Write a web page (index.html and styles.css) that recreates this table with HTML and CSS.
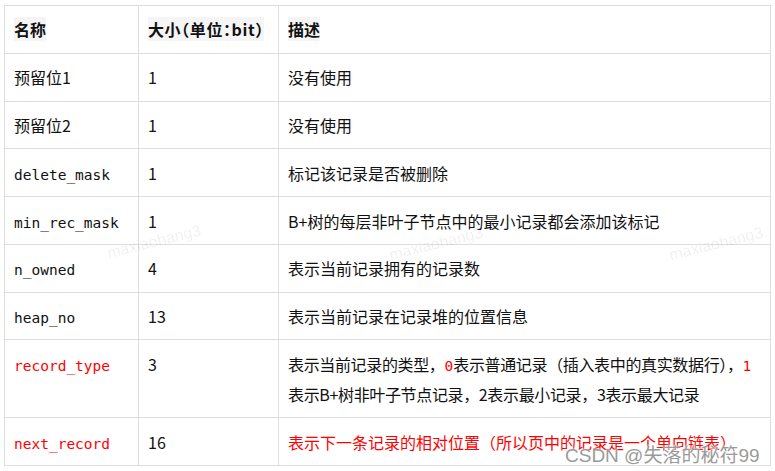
FILE: index.html
```html
<!DOCTYPE html>
<html lang="zh">
<head>
<meta charset="utf-8">
<link rel="stylesheet" href="styles.css">
</head>
<body>
<div class="wrap">
  <table class="tbl">
    <colgroup>
      <col class="c1"><col class="c2"><col class="c3">
    </colgroup>
    <thead>
      <tr>
        <th><span class="hl">名称</span></th>
        <th><span class="hl narrow">大小（单位：bit）</span></th>
        <th><span class="hl">描述</span></th>
      </tr>
    </thead>
    <tbody>
      <tr><td>预留位1</td><td>1</td><td>没有使用</td></tr>
      <tr><td>预留位2</td><td>1</td><td>没有使用</td></tr>
      <tr><td><code>delete_mask</code></td><td>1</td><td>标记该记录是否被删除</td></tr>
      <tr><td><code>min_rec_mask</code></td><td>1</td><td>B+树的每层非叶子节点中的最小记录都会添加该标记</td></tr>
      <tr><td><code>n_owned</code></td><td>4</td><td>表示当前记录拥有的记录数</td></tr>
      <tr><td><code>heap_no</code></td><td>13</td><td>表示当前记录在记录堆的位置信息</td></tr>
      <tr><td><code class="red">record_type</code></td><td>3</td><td class="tight">表示当前记录的类型，<code class="red">0</code>表示普通记录（插入表中的真实数据行），<code class="red">1</code>表示B+树非叶子节点记录，2表示最小记录，3表示最大记录</td></tr>
      <tr><td><code class="red">next_record</code></td><td>16</td><td class="red">表示下一条记录的相对位置（所以页中的记录是一个单向链表）</td></tr>
    </tbody>
  </table>
  <span class="wm wm1">maxiaohang3</span>
  <span class="wm wm2">maxiaohang3</span>
  <span class="wm wm3">maxiaohang3</span>
  <span class="csdn">CSDN @失落的秘符99</span>
</div>
</body>
</html>
```
FILE: styles.css
```css
html, body {
  margin: 0;
  padding: 0;
  background: #fff;
}
.wrap {
  position: relative;
  width: 775px;
  height: 471px;
  padding: 5px 0 0 4px;
  box-sizing: border-box;
  overflow: hidden;
}
.tbl {
  border-collapse: collapse;
  table-layout: fixed;
  width: 766px;
  font-family: "Noto Sans CJK SC", "Microsoft YaHei", sans-serif;
  font-size: 16px;
  color: #111;
}
.c1 { width: 134px; }
.c2 { width: 140px; }
.c3 { width: 492px; }
.tbl th, .tbl td {
  border: 1px solid #dedede;
  padding: 8.4px 9px 8.4px 9px;
  line-height: 30px;
  text-align: left;
  vertical-align: top;
}
.tbl th {
  font-weight: bold;
  color: #111;
  white-space: nowrap;
}
.hl {
  background: #f5f5f5;
}
.narrow {
  font-feature-settings: "halt";
  letter-spacing: 0.6px;
}
.tight {
  letter-spacing: -0.35px;
}
code {
  font-family: "DejaVu Sans Mono", monospace;
  font-size: 14.5px;
  line-height: 1;
  letter-spacing: 0;
}
.red {
  color: #f00;
}
.wm {
  position: absolute;
  font-family: "Liberation Sans", Arial, sans-serif;
  font-size: 16px;
  color: rgba(0, 0, 0, 0.07);
  transform: rotate(-14deg);
  white-space: nowrap;
}
.wm1 { left: 106px; top: 233px; }
.wm2 { left: 388px; top: 235px; }
.wm3 { left: 668px; top: 235px; }
.csdn {
  position: absolute;
  left: 565px;
  top: 440px;
  font-family: "Liberation Sans", "Noto Sans CJK SC", sans-serif;
  font-size: 19px;
  color: #9a9a9a;
  white-space: nowrap;
  text-shadow: 0 0 2px #fff, 0 0 2px #fff;
}
```
